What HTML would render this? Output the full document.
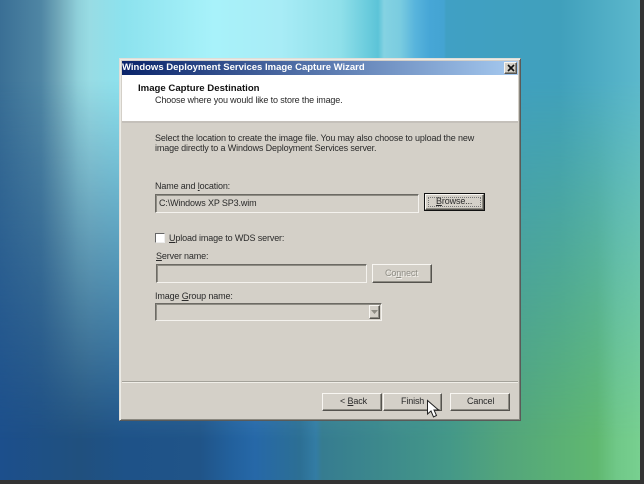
<!DOCTYPE html>
<html><head><meta charset="utf-8"><style>
html,body{margin:0;padding:0;width:644px;height:484px;overflow:hidden;background:#333}
*{box-sizing:border-box}
#s{position:absolute;left:0;top:0;width:640px;height:480px;overflow:hidden}
.l{position:absolute;inset:0}
#b{background:linear-gradient(90deg,#1c4f8c 0,#20507e 80px,#1e5288 125px,#205488 200px,#22609c 230px,#2668a8 255px,#2c6f94 300px,#337ca4 316px,#367c90 322px,#449888 449px,#52a47c 500px,#60b870 597px,#70c888 617px,#78d090 640px)}
#t{background:linear-gradient(90deg,#3a6f95 0,#4f86a4 41px,#6fa6b8 58px,#8fd0da 78px,#98dce4 90px,#8ce2ee 123px,#a8f2fa 214px,#a8ecf6 280px,#90e0ea 340px,#5cc4d8 378px,#84d2e2 384px,#7accE0 400px,#58b4dc 415px,#46a6d6 430px,#44a4d2 444px,#40a0c4 446px,#40a0bc 560px,#5cb8cc 640px);-webkit-mask-image:linear-gradient(180deg,#000 0,#000 80px,rgba(0,0,0,.55) 240px,rgba(0,0,0,0) 440px);mask-image:linear-gradient(180deg,#000 0,#000 80px,rgba(0,0,0,.55) 240px,rgba(0,0,0,0) 440px)}
#w{position:absolute;left:119px;top:58px;width:402px;height:363px;background:#d4d0c8;border:1px solid #5a5a58;border-top-color:#e0ded8;border-left-color:#e0ded8;box-shadow:inset 1px 1px 0 #ecebe6,inset -1px -1px 0 #8a8880;filter:blur(.35px)}
#w *{position:absolute}
.x{font:9px "Liberation Sans",sans-serif;color:#2a2a2a;white-space:nowrap;line-height:11px;letter-spacing:-.14px}
u{position:static!important}
.in{background:#d4d0c8;border:1px solid;border-color:#6c6a64 #f4f2ee #f4f2ee #6c6a64;box-shadow:inset 1px 1px 0 #8e8c84}
.bt{background:#d4d0c8;border:1px solid;border-color:#f8f6f2 #55534e #55534e #f8f6f2;box-shadow:inset -1px -1px 0 #8e8c84}
</style></head><body>
<div id="s"><div class="l" id="b"></div><div class="l" id="t"></div></div>
<div id="w">
<div style="left:2px;top:2px;width:396px;height:14px;background:linear-gradient(90deg,#0a246a,#a6caf0)"></div>
<div class="x" style="left:2px;top:3px;color:#fff;font-weight:bold;font-size:9.5px;letter-spacing:0">Windows Deployment Services Image Capture Wizard</div>
<div class="bt" style="left:384px;top:3px;width:13px;height:12px"></div>
<svg style="left:387px;top:5px" width="8" height="8"><path d="M1 1L7 7M7 1L1 7" stroke="#111" stroke-width="1.6"/></svg>
<div style="left:2px;top:16px;width:396px;height:46px;background:#fff"></div>
<div style="left:2px;top:62px;width:396px;height:2px;background:#c4c0ba"></div>
<div class="x" style="left:18px;top:24px;font-weight:bold;font-size:9.6px;letter-spacing:0;color:#111">Image Capture Destination</div>
<div class="x" style="left:35px;top:36px">Choose where you would like to store the image.</div>
<div class="x" style="left:35px;top:74px">Select the location to create the image file. You may also choose to upload the new</div>
<div class="x" style="left:35px;top:84px">image directly to a Windows Deployment Services server.</div>
<div class="x" style="left:35px;top:122px">Name and <u>l</u>ocation:</div>
<div class="in" style="left:35px;top:135px;width:264px;height:19px"></div>
<div class="x" style="left:39px;top:139px">C:\Windows XP SP3.wim</div>
<div style="left:304px;top:134px;width:61px;height:18px;background:#111"></div>
<div class="bt" style="left:305px;top:135px;width:59px;height:16px"></div>
<div style="left:308px;top:138px;width:53px;height:10px;border:1px dotted #777"></div>
<div class="x" style="left:316px;top:137px"><u>B</u>rowse...</div>
<div style="left:35px;top:174px;width:10px;height:10px;background:#fff;border:1px solid;border-color:#666 #eee #eee #666"></div>
<div class="x" style="left:49px;top:174px"><u>U</u>pload image to WDS server:</div>
<div class="x" style="left:36px;top:192px"><u>S</u>erver name:</div>
<div class="in" style="left:36px;top:205px;width:211px;height:19px"></div>
<div class="bt" style="left:252px;top:205px;width:60px;height:19px"></div>
<div class="x" style="left:265px;top:209px;color:#8e8c84;text-shadow:1px 1px 0 #f4f2ee">Co<u>n</u>nect</div>
<div class="x" style="left:35px;top:232px">Image <u>G</u>roup name:</div>
<div class="in" style="left:35px;top:244px;width:227px;height:18px"></div>
<div class="bt" style="left:249px;top:246px;width:11px;height:14px"></div>
<svg style="left:251px;top:251px" width="7" height="4"><path d="M0 0H7L3.500 4Z" fill="#8e8c84"/></svg>
<div style="left:2px;top:322px;width:396px;height:1px;background:#a4a29a"></div>
<div style="left:2px;top:323px;width:396px;height:1px;background:#f0eee8"></div>
<div class="bt" style="left:202px;top:334px;width:60px;height:18px"></div>
<div class="x" style="left:220px;top:337px">&lt; <u>B</u>ack</div>
<div class="bt" style="left:263px;top:334px;width:59px;height:18px"></div>
<div class="x" style="left:281px;top:337px">Finish</div>
<div class="bt" style="left:330px;top:334px;width:60px;height:18px"></div>
<div class="x" style="left:347px;top:337px">Cancel</div>
<svg style="left:306px;top:340px;overflow:visible" width="16" height="20"><path d="M1.500 1.500V15L5 12L7.500 18L10.500 16.500L8 11H12.500Z" fill="#fff" stroke="#222" stroke-width="1"/></svg>
</div>
</body></html>
